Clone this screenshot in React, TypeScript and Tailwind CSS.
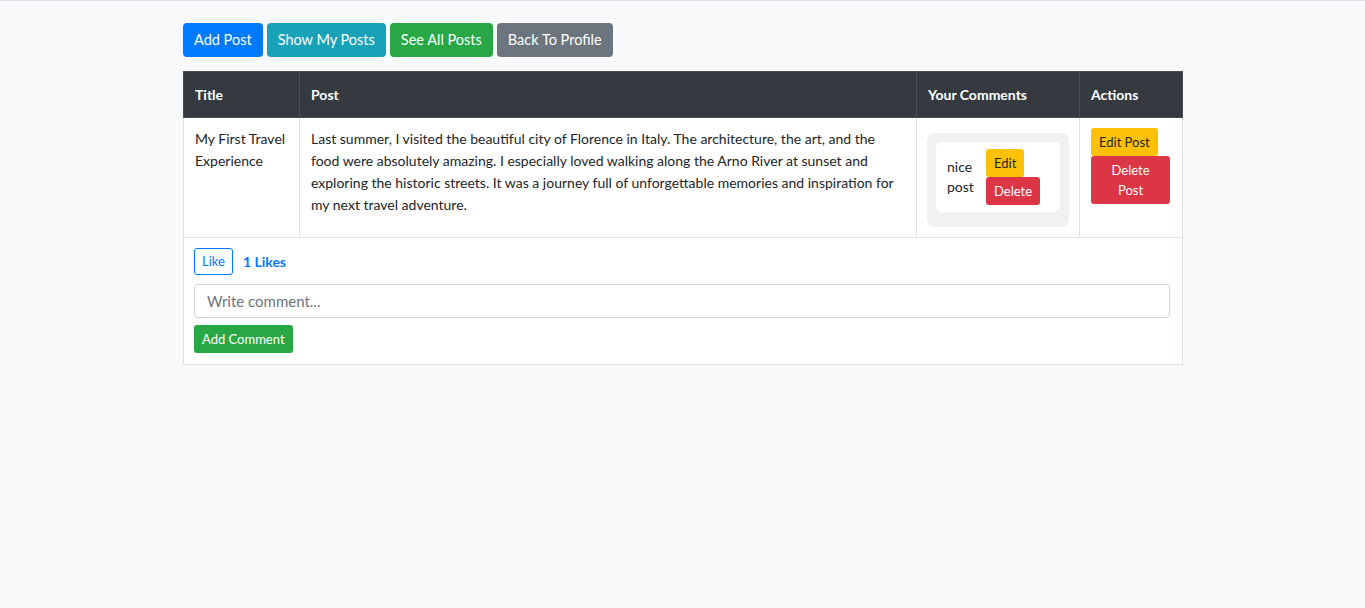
import React from "react";

const btn = "inline-flex items-center justify-center rounded-[4px] text-white";
const btnTop = `${btn} h-[34px] px-[11px] text-[14.5px]`;
const btnSm = "rounded-[3px] px-2 py-1 text-[13px] leading-[20px]";
const cell = "border border-[#dee2e6] pl-[11px] pr-3 pt-[10px] align-top";
const head = "border border-[#454d55] pl-[11px] pr-3 font-bold";

export default function App() {
  return (
    <div className="min-h-screen border-t border-[#dee2e6] bg-[#f8f9fa] font-['Lato','Noto_Sans',sans-serif] text-[#212529]">
      <div className="mx-auto w-[999px] pt-[22px]">
        {/* top nav buttons */}
        <div className="flex gap-1">
          <button type="button" className={`${btnTop} bg-[#007bff]`}>
            Add Post
          </button>
          <button type="button" className={`${btnTop} bg-[#17a2b8]`}>
            Show My Posts
          </button>
          <button type="button" className={`${btnTop} bg-[#28a745]`}>
            See All Posts
          </button>
          <button type="button" className={`${btnTop} bg-[#6c757d]`}>
            Back To Profile
          </button>
        </div>

        <table className="mt-[14px] w-full table-fixed border-collapse text-[14px] leading-[22px]">
          <colgroup>
            <col className="w-[116px]" />
            <col className="w-[617px]" />
            <col className="w-[163px]" />
            <col className="w-[103px]" />
          </colgroup>
          <thead>
            <tr className="h-[46px] bg-[#343a40] text-left text-white">
              <th className={head}>Title</th>
              <th className={head}>Post</th>
              <th className={head}>Your Comments</th>
              <th className={head}>Actions</th>
            </tr>
          </thead>
          <tbody className="bg-white">
            <tr>
              <td className={cell}>My First Travel Experience</td>
              <td className={cell}>
                Last summer, I visited the beautiful city of Florence in Italy. The
                architecture, the art, and the food were absolutely amazing. I
                especially loved walking along the Arno River at sunset and exploring
                the historic streets. It was a journey full of unforgettable memories
                and inspiration for my next travel adventure.
              </td>
              <td className="border border-[#dee2e6] px-[10px] pb-[10px] pt-[15px] align-top">
                <div className="rounded-[8px] bg-[#f0f1f3] p-[9px] pb-[15px]">
                  <div className="flex items-center gap-[11px] rounded-[5px] bg-white px-[11px] py-[7px]">
                    <p className="w-[28px] text-[14px] leading-[20px]">nice post</p>
                    <div className="flex flex-col items-start">
                      <button type="button" className={`${btnSm} bg-[#ffc107] text-[#212529]`}>
                        Edit
                      </button>
                      <button type="button" className={`${btnSm} bg-[#dc3545] text-white`}>
                        Delete
                      </button>
                    </div>
                  </div>
                </div>
              </td>
              <td className={cell}>
                <div className="flex flex-col items-start">
                  <button type="button" className={`${btnSm} bg-[#ffc107] text-[#212529]`}>
                    Edit Post
                  </button>
                  <button type="button" className={`${btnSm} w-full bg-[#dc3545] text-center text-white`}>
                    Delete Post
                  </button>
                </div>
              </td>
            </tr>
            <tr>
              <td colSpan={4} className="border border-[#dee2e6] px-[10px] pb-[11px] pr-3 pt-[10px]">
                <div className="flex items-center gap-[10px]">
                  <button
                    type="button"
                    className="rounded-[3px] border border-[#007bff] px-[7px] py-[2px] text-[13px] leading-[21px] text-[#007bff]"
                  >
                    Like
                  </button>
                  <span className="font-bold text-[#007bff]">1 Likes</span>
                </div>
                <input
                  type="text"
                  placeholder="Write comment..."
                  className="mt-[9px] block h-[34px] w-full rounded-[4px] border border-[#ced4da] px-3 text-[15px] placeholder:text-[#6c757d]"
                />
                <button type="button" className={`${btnSm} mt-[7px] bg-[#28a745] text-white`}>
                  Add Comment
                </button>
              </td>
            </tr>
          </tbody>
        </table>
      </div>
    </div>
  );
}
